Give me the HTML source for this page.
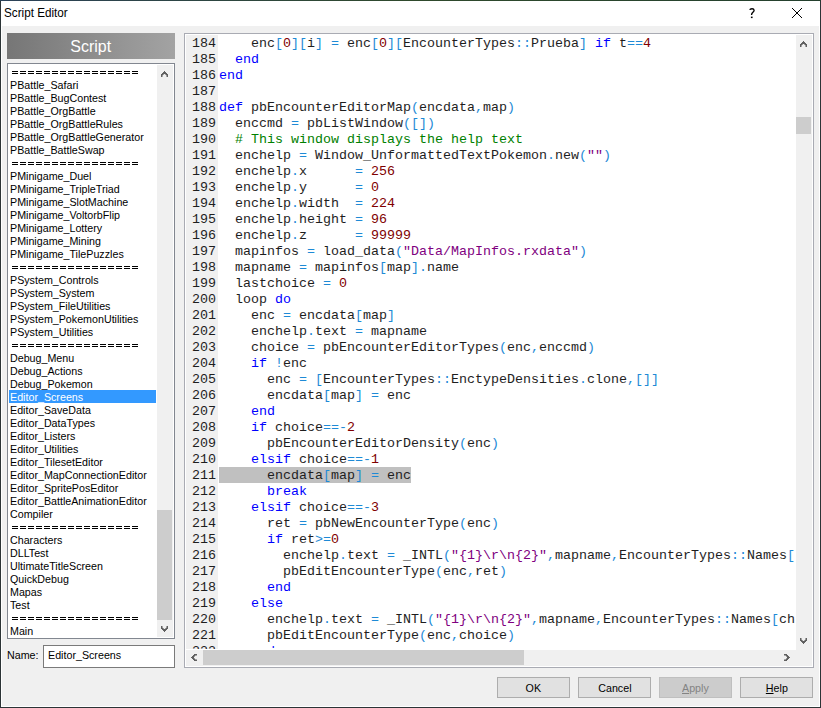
<!DOCTYPE html>
<html><head><meta charset="utf-8">
<style>
*{margin:0;padding:0;box-sizing:border-box}
html,body{width:821px;height:708px;overflow:hidden;background:#f0f0f0}
body{position:relative;font-family:"Liberation Sans",sans-serif;font-size:12px;color:#000}
.a{position:absolute}
#frame{left:0;top:0;width:821px;height:708px;border:1px solid #2c3436}
#frame2{left:1px;top:1px;width:819px;height:706px;border:1px solid #fff;border-top:0}
#title{left:1px;top:1px;width:819px;height:25px;background:#fff}
#ttext{left:4px;top:6px;font-size:12px;line-height:14px;white-space:nowrap;transform:scaleX(0.975);transform-origin:0 0}
#help{left:749px;top:6px;font-size:13px;line-height:16px;transform:scaleX(0.85);transform-origin:0 0}
#hdr{left:7px;top:33px;width:168px;height:26px;background:linear-gradient(to right,#767676,#a3a3a3);color:#fff;font-size:17px;line-height:27px;text-align:center}
#hdr span{display:inline-block;transform:scaleX(0.94);transform-origin:50% 0}
#list{left:7px;top:63px;width:168px;height:576px;border:1px solid #828790;background:#fff;overflow:hidden}
.li{position:absolute;left:1px;width:147px;height:13px;line-height:13px;white-space:nowrap;font-size:11.5px}
.li span{position:absolute;left:1px;top:1px;transform:scaleX(0.93);transform-origin:0 0}
.li svg{position:absolute;left:3px;top:6px}
.li.on{background:#3399ff;color:#fff}
.sx{display:inline-block;transform:scaleX(0.93);transform-origin:0 0;white-space:nowrap;font-size:11.5px}
#nlabel{left:7px;top:649px;line-height:13px}
#nbox{left:43px;top:645px;width:132px;height:23px;border:1px solid #7a7a7a;background:#fff}
#nbox span{position:absolute;left:4px;top:3px;line-height:13px}
#code{left:184px;top:33px;width:630px;height:635px;border:1px solid #a9abb3;background:#fff}
#gutter{left:186px;top:35px;width:32px;height:614px;background:#f0f0f0;overflow:hidden}
#codearea{left:218px;top:35px;width:577px;height:613px;overflow:hidden;background:#fff}
.ln,.cl{position:absolute;height:16px;line-height:18px;font-family:"Liberation Mono",monospace;font-size:13.333px;white-space:pre;color:#1e1e1e}
.ln{left:6px}
.cl{left:1px}
.cl.sel{background:#c0c0c0}
i{font-style:normal}
.k{color:#0000ff}.o{color:#1e8ad6}.n{color:#800000}.s{color:#800080}.c{color:#008000}
.trk{background:#f0f0f0}
.thm{background:#cdcdcd}
.btn{position:absolute;top:677px;width:73px;height:21px;border:1px solid #adadad;background:#e1e1e1;text-align:center;line-height:13px;padding-top:4px}
.btn .sx{transform-origin:50% 0}
.btn.dis{background:#cccccc;border-color:#bfbfbf;color:#838383}
u{text-decoration:underline}
svg{position:absolute;overflow:visible}
.ar{fill:#606060;shape-rendering:crispEdges}
</style></head><body>
<div class="a" id="frame"></div>
<div class="a" id="frame2"></div>
<div class="a" style="left:0;top:0;width:821px;height:1px;background:linear-gradient(to right,#2b4158,#2f4a2c 50%,#24402e)"></div>
<div class="a" id="title"></div>
<div class="a" id="ttext">Script Editor</div>
<svg style="left:744px;top:4px" width="18" height="18"><path d="M5.7 5.8C6.2 4.5 9.9 4.0 10.1 6.3C10.2 8.0 7.8 8.6 7.6 10.4L7.6 11" stroke="#000" stroke-width="1.35" fill="none"/><rect x="6.9" y="12.6" width="1.7" height="1.5" fill="#000"/></svg>
<svg style="left:792px;top:8px" width="10" height="10" shape-rendering="crispEdges"><path d="M0 0h1v1h-1zM1 1h1v1h-1zM2 2h1v1h-1zM3 3h1v1h-1zM4 4h1v1h-1zM5 5h1v1h-1zM6 6h1v1h-1zM7 7h1v1h-1zM8 8h1v1h-1zM9 9h1v1h-1zM9 0h1v1h-1zM8 1h1v1h-1zM7 2h1v1h-1zM6 3h1v1h-1zM5 4h1v1h-1zM4 5h1v1h-1zM3 6h1v1h-1zM2 7h1v1h-1zM1 8h1v1h-1zM0 9h1v1h-1z" fill="#000"/></svg>
<div class="a" id="hdr"><span>Script</span></div>
<div class="a" id="list">
<div class="li eq" style="top:1px"><svg width="126" height="3"><path d="M0 0.5H126M0 2.5H126" stroke="#000" stroke-width="1" stroke-dasharray="6 2"/></svg></div>
<div class="li" style="top:14px"><span>PBattle_Safari</span></div>
<div class="li" style="top:27px"><span>PBattle_BugContest</span></div>
<div class="li" style="top:40px"><span>PBattle_OrgBattle</span></div>
<div class="li" style="top:53px"><span>PBattle_OrgBattleRules</span></div>
<div class="li" style="top:66px"><span>PBattle_OrgBattleGenerator</span></div>
<div class="li" style="top:79px"><span>PBattle_BattleSwap</span></div>
<div class="li eq" style="top:92px"><svg width="126" height="3"><path d="M0 0.5H126M0 2.5H126" stroke="#000" stroke-width="1" stroke-dasharray="6 2"/></svg></div>
<div class="li" style="top:105px"><span>PMinigame_Duel</span></div>
<div class="li" style="top:118px"><span>PMinigame_TripleTriad</span></div>
<div class="li" style="top:131px"><span>PMinigame_SlotMachine</span></div>
<div class="li" style="top:144px"><span>PMinigame_VoltorbFlip</span></div>
<div class="li" style="top:157px"><span>PMinigame_Lottery</span></div>
<div class="li" style="top:170px"><span>PMinigame_Mining</span></div>
<div class="li" style="top:183px"><span>PMinigame_TilePuzzles</span></div>
<div class="li eq" style="top:196px"><svg width="126" height="3"><path d="M0 0.5H126M0 2.5H126" stroke="#000" stroke-width="1" stroke-dasharray="6 2"/></svg></div>
<div class="li" style="top:209px"><span>PSystem_Controls</span></div>
<div class="li" style="top:222px"><span>PSystem_System</span></div>
<div class="li" style="top:235px"><span>PSystem_FileUtilities</span></div>
<div class="li" style="top:248px"><span>PSystem_PokemonUtilities</span></div>
<div class="li" style="top:261px"><span>PSystem_Utilities</span></div>
<div class="li eq" style="top:274px"><svg width="126" height="3"><path d="M0 0.5H126M0 2.5H126" stroke="#000" stroke-width="1" stroke-dasharray="6 2"/></svg></div>
<div class="li" style="top:287px"><span>Debug_Menu</span></div>
<div class="li" style="top:300px"><span>Debug_Actions</span></div>
<div class="li" style="top:313px"><span>Debug_Pokemon</span></div>
<div class="li on" style="top:326px"><span>Editor_Screens</span></div>
<div class="li" style="top:339px"><span>Editor_SaveData</span></div>
<div class="li" style="top:352px"><span>Editor_DataTypes</span></div>
<div class="li" style="top:365px"><span>Editor_Listers</span></div>
<div class="li" style="top:378px"><span>Editor_Utilities</span></div>
<div class="li" style="top:391px"><span>Editor_TilesetEditor</span></div>
<div class="li" style="top:404px"><span>Editor_MapConnectionEditor</span></div>
<div class="li" style="top:417px"><span>Editor_SpritePosEditor</span></div>
<div class="li" style="top:430px"><span>Editor_BattleAnimationEditor</span></div>
<div class="li" style="top:443px"><span>Compiler</span></div>
<div class="li eq" style="top:456px"><svg width="126" height="3"><path d="M0 0.5H126M0 2.5H126" stroke="#000" stroke-width="1" stroke-dasharray="6 2"/></svg></div>
<div class="li" style="top:469px"><span>Characters</span></div>
<div class="li" style="top:482px"><span>DLLTest</span></div>
<div class="li" style="top:495px"><span>UltimateTitleScreen</span></div>
<div class="li" style="top:508px"><span>QuickDebug</span></div>
<div class="li" style="top:521px"><span>Mapas</span></div>
<div class="li" style="top:534px"><span>Test</span></div>
<div class="li eq" style="top:547px"><svg width="126" height="3"><path d="M0 0.5H126M0 2.5H126" stroke="#000" stroke-width="1" stroke-dasharray="6 2"/></svg></div>
<div class="li" style="top:560px"><span>Main</span></div>
</div>
<div class="a trk" style="left:157px;top:65px;width:16px;height:572px"></div>
<div class="a thm" style="left:157px;top:510px;width:15px;height:110px"></div>
<svg style="left:161px;top:71px" width="7" height="6" shape-rendering="crispEdges"><path d="M3 0h1v1h-1zM2 1h1v1h-1zM3 1h1v1h-1zM4 1h1v1h-1zM1 2h1v1h-1zM2 2h1v1h-1zM3 2h1v1h-1zM4 2h1v1h-1zM5 2h1v1h-1zM0 3h1v1h-1zM1 3h1v1h-1zM5 3h1v1h-1zM6 3h1v1h-1zM0 4h1v1h-1zM6 4h1v1h-1zM0 5h1v1h-1zM6 5h1v1h-1z" fill="#606060"/><path d="M2 3h1v1h-1zM4 3h1v1h-1zM1 4h1v1h-1zM5 4h1v1h-1z" fill="#606060" fill-opacity="0.6"/><path d="M1 5h1v1h-1zM5 5h1v1h-1z" fill="#606060" fill-opacity="0.5"/></svg>
<svg style="left:161px;top:626px" width="7" height="6" shape-rendering="crispEdges"><path d="M0 0h1v1h-1zM6 0h1v1h-1zM0 1h1v1h-1zM6 1h1v1h-1zM0 2h1v1h-1zM1 2h1v1h-1zM5 2h1v1h-1zM6 2h1v1h-1zM1 3h1v1h-1zM2 3h1v1h-1zM3 3h1v1h-1zM4 3h1v1h-1zM5 3h1v1h-1zM2 4h1v1h-1zM3 4h1v1h-1zM4 4h1v1h-1zM3 5h1v1h-1z" fill="#606060"/><path d="M1 0h1v1h-1zM5 0h1v1h-1z" fill="#606060" fill-opacity="0.5"/><path d="M1 1h1v1h-1zM5 1h1v1h-1zM2 2h1v1h-1zM4 2h1v1h-1z" fill="#606060" fill-opacity="0.6"/></svg>
<div class="a" id="nlabel"><span class="sx">Name:</span></div>
<div class="a" id="nbox"><span class="sx">Editor_Screens</span></div>
<div class="a" id="code"></div>
<div class="a" id="gutter">
<div class="ln" style="top:0px">184</div>
<div class="ln" style="top:16px">185</div>
<div class="ln" style="top:32px">186</div>
<div class="ln" style="top:48px">187</div>
<div class="ln" style="top:64px">188</div>
<div class="ln" style="top:80px">189</div>
<div class="ln" style="top:96px">190</div>
<div class="ln" style="top:112px">191</div>
<div class="ln" style="top:128px">192</div>
<div class="ln" style="top:144px">193</div>
<div class="ln" style="top:160px">194</div>
<div class="ln" style="top:176px">195</div>
<div class="ln" style="top:192px">196</div>
<div class="ln" style="top:208px">197</div>
<div class="ln" style="top:224px">198</div>
<div class="ln" style="top:240px">199</div>
<div class="ln" style="top:256px">200</div>
<div class="ln" style="top:272px">201</div>
<div class="ln" style="top:288px">202</div>
<div class="ln" style="top:304px">203</div>
<div class="ln" style="top:320px">204</div>
<div class="ln" style="top:336px">205</div>
<div class="ln" style="top:352px">206</div>
<div class="ln" style="top:368px">207</div>
<div class="ln" style="top:384px">208</div>
<div class="ln" style="top:400px">209</div>
<div class="ln" style="top:416px">210</div>
<div class="ln" style="top:432px">211</div>
<div class="ln" style="top:448px">212</div>
<div class="ln" style="top:464px">213</div>
<div class="ln" style="top:480px">214</div>
<div class="ln" style="top:496px">215</div>
<div class="ln" style="top:512px">216</div>
<div class="ln" style="top:528px">217</div>
<div class="ln" style="top:544px">218</div>
<div class="ln" style="top:560px">219</div>
<div class="ln" style="top:576px">220</div>
<div class="ln" style="top:592px">221</div>
<div class="ln" style="top:608px">222</div>
<div class="ln" style="top:624px">223</div>
</div>
<div class="a" id="codearea">
<div class="cl" style="top:0px">    enc<i class="o">[</i><i class="n">0</i><i class="o">]</i><i class="o">[</i>i<i class="o">]</i> <i class="o">=</i> enc<i class="o">[</i><i class="n">0</i><i class="o">]</i><i class="o">[</i>EncounterTypes<i class="o">:</i><i class="o">:</i>Prueba<i class="o">]</i> <i class="k">if</i> t<i class="o">=</i><i class="o">=</i><i class="n">4</i></div>
<div class="cl" style="top:16px">  <i class="k">end</i></div>
<div class="cl" style="top:32px"><i class="k">end</i></div>
<div class="cl" style="top:48px"></div>
<div class="cl" style="top:64px"><i class="k">def</i> pbEncounterEditorMap<i class="o">(</i>encdata<i class="o">,</i>map<i class="o">)</i></div>
<div class="cl" style="top:80px">  enccmd <i class="o">=</i> pbListWindow<i class="o">(</i><i class="o">[</i><i class="o">]</i><i class="o">)</i></div>
<div class="cl" style="top:96px">  <i class="c"># This window displays the help text</i></div>
<div class="cl" style="top:112px">  enchelp <i class="o">=</i> Window_UnformattedTextPokemon<i class="o">.</i>new<i class="o">(</i><i class="s">&quot;&quot;</i><i class="o">)</i></div>
<div class="cl" style="top:128px">  enchelp<i class="o">.</i>x      <i class="o">=</i> <i class="n">256</i></div>
<div class="cl" style="top:144px">  enchelp<i class="o">.</i>y      <i class="o">=</i> <i class="n">0</i></div>
<div class="cl" style="top:160px">  enchelp<i class="o">.</i>width  <i class="o">=</i> <i class="n">224</i></div>
<div class="cl" style="top:176px">  enchelp<i class="o">.</i>height <i class="o">=</i> <i class="n">96</i></div>
<div class="cl" style="top:192px">  enchelp<i class="o">.</i>z      <i class="o">=</i> <i class="n">99999</i></div>
<div class="cl" style="top:208px">  mapinfos <i class="o">=</i> load_data<i class="o">(</i><i class="s">&quot;Data/MapInfos.rxdata&quot;</i><i class="o">)</i></div>
<div class="cl" style="top:224px">  mapname <i class="o">=</i> mapinfos<i class="o">[</i>map<i class="o">]</i><i class="o">.</i>name</div>
<div class="cl" style="top:240px">  lastchoice <i class="o">=</i> <i class="n">0</i></div>
<div class="cl" style="top:256px">  loop <i class="k">do</i></div>
<div class="cl" style="top:272px">    enc <i class="o">=</i> encdata<i class="o">[</i>map<i class="o">]</i></div>
<div class="cl" style="top:288px">    enchelp<i class="o">.</i>text <i class="o">=</i> mapname</div>
<div class="cl" style="top:304px">    choice <i class="o">=</i> pbEncounterEditorTypes<i class="o">(</i>enc<i class="o">,</i>enccmd<i class="o">)</i></div>
<div class="cl" style="top:320px">    <i class="k">if</i> <i class="o">!</i>enc</div>
<div class="cl" style="top:336px">      enc <i class="o">=</i> <i class="o">[</i>EncounterTypes<i class="o">:</i><i class="o">:</i>EnctypeDensities<i class="o">.</i>clone<i class="o">,</i><i class="o">[</i><i class="o">]</i><i class="o">]</i></div>
<div class="cl" style="top:352px">      encdata<i class="o">[</i>map<i class="o">]</i> <i class="o">=</i> enc</div>
<div class="cl" style="top:368px">    <i class="k">end</i></div>
<div class="cl" style="top:384px">    <i class="k">if</i> choice<i class="o">=</i><i class="o">=</i><i class="o">-</i><i class="n">2</i></div>
<div class="cl" style="top:400px">      pbEncounterEditorDensity<i class="o">(</i>enc<i class="o">)</i></div>
<div class="cl" style="top:416px">    <i class="k">elsif</i> choice<i class="o">=</i><i class="o">=</i><i class="o">-</i><i class="n">1</i></div>
<div class="cl sel" style="top:432px">      encdata<i class="o">[</i>map<i class="o">]</i> <i class="o">=</i> enc</div>
<div class="cl" style="top:448px">      <i class="k">break</i></div>
<div class="cl" style="top:464px">    <i class="k">elsif</i> choice<i class="o">=</i><i class="o">=</i><i class="o">-</i><i class="n">3</i></div>
<div class="cl" style="top:480px">      ret <i class="o">=</i> pbNewEncounterType<i class="o">(</i>enc<i class="o">)</i></div>
<div class="cl" style="top:496px">      <i class="k">if</i> ret<i class="o">&gt;</i><i class="o">=</i><i class="n">0</i></div>
<div class="cl" style="top:512px">        enchelp<i class="o">.</i>text <i class="o">=</i> _INTL<i class="o">(</i><i class="s">&quot;{1}\r\n{2}&quot;</i><i class="o">,</i>mapname<i class="o">,</i>EncounterTypes<i class="o">:</i><i class="o">:</i>Names<i class="o">[</i>ret<i class="o">]</i><i class="o">)</i></div>
<div class="cl" style="top:528px">        pbEditEncounterType<i class="o">(</i>enc<i class="o">,</i>ret<i class="o">)</i></div>
<div class="cl" style="top:544px">      <i class="k">end</i></div>
<div class="cl" style="top:560px">    <i class="k">else</i></div>
<div class="cl" style="top:576px">      enchelp<i class="o">.</i>text <i class="o">=</i> _INTL<i class="o">(</i><i class="s">&quot;{1}\r\n{2}&quot;</i><i class="o">,</i>mapname<i class="o">,</i>EncounterTypes<i class="o">:</i><i class="o">:</i>Names<i class="o">[</i>choice<i class="o">]</i><i class="o">)</i></div>
<div class="cl" style="top:592px">      pbEditEncounterType<i class="o">(</i>enc<i class="o">,</i>choice<i class="o">)</i></div>
<div class="cl" style="top:608px">    <i class="k">end</i></div>
<div class="cl" style="top:624px">  <i class="k">end</i></div>
</div>
<div class="a trk" style="left:796px;top:35px;width:16px;height:615px"></div>
<div class="a thm" style="left:796px;top:117px;width:15px;height:17px"></div>
<div class="a trk" style="left:186px;top:650px;width:626px;height:16px"></div>
<div class="a thm" style="left:203px;top:650px;width:321px;height:15px"></div>
<svg style="left:800px;top:41px" width="7" height="6" shape-rendering="crispEdges"><path d="M3 0h1v1h-1zM2 1h1v1h-1zM3 1h1v1h-1zM4 1h1v1h-1zM1 2h1v1h-1zM2 2h1v1h-1zM3 2h1v1h-1zM4 2h1v1h-1zM5 2h1v1h-1zM0 3h1v1h-1zM1 3h1v1h-1zM5 3h1v1h-1zM6 3h1v1h-1zM0 4h1v1h-1zM6 4h1v1h-1zM0 5h1v1h-1zM6 5h1v1h-1z" fill="#606060"/><path d="M2 3h1v1h-1zM4 3h1v1h-1zM1 4h1v1h-1zM5 4h1v1h-1z" fill="#606060" fill-opacity="0.6"/><path d="M1 5h1v1h-1zM5 5h1v1h-1z" fill="#606060" fill-opacity="0.5"/></svg>
<svg style="left:800px;top:638px" width="7" height="6" shape-rendering="crispEdges"><path d="M0 0h1v1h-1zM6 0h1v1h-1zM0 1h1v1h-1zM6 1h1v1h-1zM0 2h1v1h-1zM1 2h1v1h-1zM5 2h1v1h-1zM6 2h1v1h-1zM1 3h1v1h-1zM2 3h1v1h-1zM3 3h1v1h-1zM4 3h1v1h-1zM5 3h1v1h-1zM2 4h1v1h-1zM3 4h1v1h-1zM4 4h1v1h-1zM3 5h1v1h-1z" fill="#606060"/><path d="M1 0h1v1h-1zM5 0h1v1h-1z" fill="#606060" fill-opacity="0.5"/><path d="M1 1h1v1h-1zM5 1h1v1h-1zM2 2h1v1h-1zM4 2h1v1h-1z" fill="#606060" fill-opacity="0.6"/></svg>
<svg style="left:191px;top:654px" width="6" height="7" shape-rendering="crispEdges"><path d="M3 0h1v1h-1zM4 0h1v1h-1zM5 0h1v1h-1zM2 1h1v1h-1zM3 1h1v1h-1zM1 2h1v1h-1zM2 2h1v1h-1zM0 3h1v1h-1zM1 3h1v1h-1zM2 3h1v1h-1zM1 4h1v1h-1zM2 4h1v1h-1zM2 5h1v1h-1zM3 5h1v1h-1zM3 6h1v1h-1zM4 6h1v1h-1zM5 6h1v1h-1z" fill="#606060"/><path d="M4 1h1v1h-1zM3 2h1v1h-1zM3 4h1v1h-1zM4 5h1v1h-1z" fill="#606060" fill-opacity="0.6"/><path d="M5 1h1v1h-1zM5 5h1v1h-1z" fill="#606060" fill-opacity="0.5"/></svg>
<svg style="left:784px;top:654px" width="6" height="7" shape-rendering="crispEdges"><path d="M0 0h1v1h-1zM1 0h1v1h-1zM2 0h1v1h-1zM2 1h1v1h-1zM3 1h1v1h-1zM3 2h1v1h-1zM4 2h1v1h-1zM3 3h1v1h-1zM4 3h1v1h-1zM5 3h1v1h-1zM3 4h1v1h-1zM4 4h1v1h-1zM2 5h1v1h-1zM3 5h1v1h-1zM0 6h1v1h-1zM1 6h1v1h-1zM2 6h1v1h-1z" fill="#606060"/><path d="M0 1h1v1h-1zM0 5h1v1h-1z" fill="#606060" fill-opacity="0.5"/><path d="M1 1h1v1h-1zM2 2h1v1h-1zM2 4h1v1h-1zM1 5h1v1h-1z" fill="#606060" fill-opacity="0.6"/></svg>
<div class="btn" style="left:497px"><span class="sx">OK</span></div>
<div class="btn" style="left:578px"><span class="sx">Cancel</span></div>
<div class="btn dis" style="left:659px"><span class="sx"><u>A</u>pply</span></div>
<div class="btn" style="left:740px"><span class="sx"><u>H</u>elp</span></div>
</body></html>
